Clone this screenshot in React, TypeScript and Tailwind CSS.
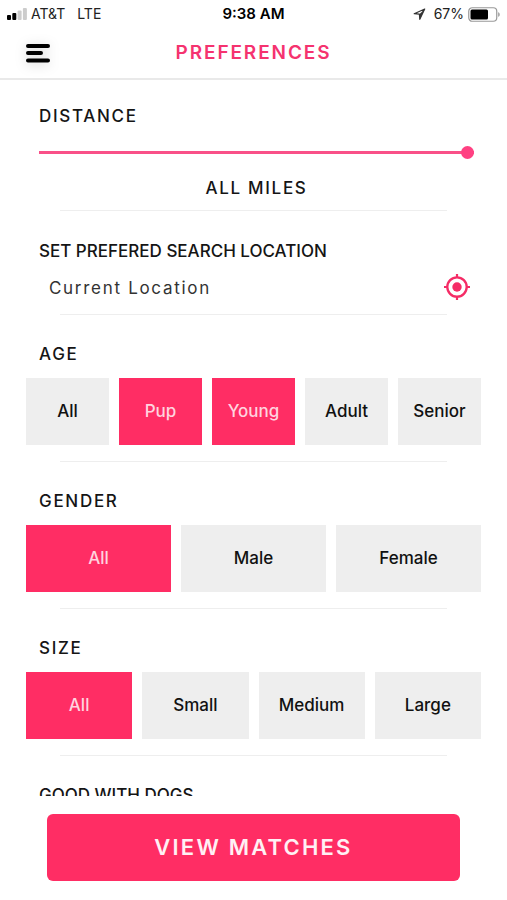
import { useState } from "react";

type OptionGroup = {
  title: string;
  options: string[];
  initial: string[];
  columns: string;
};

const groups: OptionGroup[] = [
  { title: "AGE", options: ["All", "Pup", "Young", "Adult", "Senior"], initial: ["Pup", "Young"], columns: "grid-cols-5" },
  { title: "GENDER", options: ["All", "Male", "Female"], initial: ["All"], columns: "grid-cols-3" },
  { title: "SIZE", options: ["All", "Small", "Medium", "Large"], initial: ["All"], columns: "grid-cols-4" },
];

function StatusBar() {
  return (
    <div className="grid h-7 grid-cols-3 items-center px-[7px] text-sm text-[#222]">
      <div className="flex items-center gap-1">
        <svg width="20" height="12" viewBox="0 0 20 12" aria-hidden="true">
          <rect x="0" y="7" width="4" height="5" rx="1" fill="#000" />
          <rect x="5.3" y="5" width="4" height="7" rx="1" fill="#000" />
          <rect x="10.6" y="2.5" width="4" height="9.5" rx="1" fill="#ccc" />
          <rect x="15.9" y="0" width="4" height="12" rx="1" fill="#ccc" />
        </svg>
        <span>AT&amp;T</span>
        <span className="ml-2">LTE</span>
      </div>
      <div className="text-center text-[15px] font-semibold text-black">9:38 AM</div>
      <div className="flex items-center justify-end gap-1">
        <svg className="mr-1" width="13" height="12" viewBox="0 0 13 12" aria-hidden="true">
          <path d="M11.7 1 1.2 5.7l5.2.5.4 5.1z" fill="none" stroke="#333" strokeWidth="1.2" strokeLinejoin="round" />
          <path d="M11.7 1 6.4 6.2l.4 5.1z" fill="#333" />
        </svg>
        <span>67%</span>
        <svg width="32" height="15" viewBox="0 0 32 15" aria-hidden="true">
          <rect x="0.75" y="0.75" width="28" height="13.5" rx="3.5" fill="#fff" stroke="#999" strokeWidth="1.2" />
          <rect x="2.5" y="2.5" width="17.5" height="10" rx="1.5" fill="#000" />
          <path d="M30.2 5.2v4.6c1-.4 1.5-1.2 1.5-2.3s-.5-1.9-1.5-2.3z" fill="#999" />
        </svg>
      </div>
    </div>
  );
}

function Divider() {
  return <hr className="mx-[60px] border-t border-[#eee]" />;
}

function OptionSection({ title, options, initial, columns }: OptionGroup) {
  const [selected, setSelected] = useState(initial);
  const toggle = (option: string) =>
    setSelected((current) =>
      current.includes(option) ? current.filter((item) => item !== option) : [...current, option],
    );

  return (
    <section>
      <div className="px-[26px] pt-[27px] pb-4">
        <h2 className="mb-3 px-[13px] text-[17px] leading-6 font-medium tracking-widest">{title}</h2>
        <div className={`grid gap-[10px] ${columns}`}>
          {options.map((option) => {
            const active = selected.includes(option);
            return (
              <button
                key={option}
                type="button"
                aria-pressed={active}
                onClick={() => toggle(option)}
                className={`h-[67px] text-[17px] font-medium ${active ? "bg-[#ff2d64] text-[#ffd3df]" : "bg-[#eee] text-[#111]"}`}
              >
                {option}
              </button>
            );
          })}
        </div>
      </div>
      <Divider />
    </section>
  );
}

export default function App() {
  const [distance, setDistance] = useState(100);
  const [location, setLocation] = useState("Current Location");

  return (
    <div className="flex h-screen flex-col bg-white font-['Inter',sans-serif] text-[#151515]">
      <StatusBar />
      <header className="grid h-[52px] shrink-0 grid-cols-[48px_1fr_48px] items-center border-b-2 border-[#e9e9e9] px-[14px]">
        <button type="button" aria-label="Menu" className="flex size-12 items-center justify-center">
          <svg className="drop-shadow-[0_2px_6px_rgba(0,0,0,0.18)]" width="26" height="20" viewBox="0 0 26 20" stroke="#000" strokeWidth="4" strokeLinecap="round" aria-hidden="true">
            <path d="M3 3h20M3 10h13M3 17.5h20" />
          </svg>
        </button>
        <h1 className="text-center text-[19px] font-semibold tracking-widest text-[#f5336f]">PREFERENCES</h1>
      </header>

      <main className="min-h-0 flex-1 overflow-y-auto [scrollbar-width:none]">
        <section>
          <div className="pt-6 pr-[33px] pb-[10px] pl-[39px]">
            <label htmlFor="distance" className="block text-[17px] leading-6 font-medium tracking-widest">
              DISTANCE
            </label>
            <div className="flex h-12 items-center">
              <input
                id="distance"
                type="range"
                min={1}
                max={100}
                value={distance}
                onChange={(event) => setDistance(Number(event.target.value))}
                className="h-3 w-full appearance-none bg-transparent [&::-webkit-slider-runnable-track]:h-[3px] [&::-webkit-slider-runnable-track]:bg-[#f95088] [&::-webkit-slider-thumb]:-mt-[5px] [&::-webkit-slider-thumb]:size-[13px] [&::-webkit-slider-thumb]:appearance-none [&::-webkit-slider-thumb]:rounded-full [&::-webkit-slider-thumb]:bg-[#ff4182]"
              />
            </div>
            <output htmlFor="distance" className="block text-center text-[17px] leading-6 font-medium tracking-widest">
              {distance === 100 ? "ALL MILES" : `${distance} MILES`}
            </output>
          </div>
          <Divider />
        </section>

        <section>
          <div className="pt-7 pr-[37px] pl-[39px]">
            <label htmlFor="location" className="block text-[17px] leading-6 font-medium">
              SET PREFERED SEARCH LOCATION
            </label>
            <div className="flex h-[51px] items-center">
              <input
                id="location"
                type="text"
                value={location}
                onChange={(event) => setLocation(event.target.value)}
                className="min-w-0 flex-1 px-[10px] text-[17px] tracking-widest text-[#333] outline-none"
              />
              <button type="button" aria-label="Use current location" className="pb-1">
                <svg className="block" width="26" height="26" viewBox="0 0 26 26" fill="none" stroke="#f52c66" aria-hidden="true">
                  <circle cx="13" cy="13" r="9.7" strokeWidth="2.3" />
                  <circle cx="13" cy="13" r="4.7" fill="#f52c66" stroke="none" />
                  <path d="M13 0v4M13 22v4M0 13h4M22 13h4" strokeWidth="2.2" />
                </svg>
              </button>
            </div>
          </div>
          <Divider />
        </section>

        {groups.map((group) => (
          <OptionSection key={group.title} {...group} />
        ))}

        <h2 className="px-[39px] pt-[27px] text-[17px] leading-6 font-medium">GOOD WITH DOGS</h2>
      </main>

      <footer className="shrink-0 px-[47px] pt-[18px] pb-[19px]">
        <button type="button" className="h-[67px] w-full rounded-md bg-[#ff2d64] text-[22px] font-semibold tracking-widest text-[#fff0f4]">
          VIEW MATCHES
        </button>
      </footer>
    </div>
  );
}
